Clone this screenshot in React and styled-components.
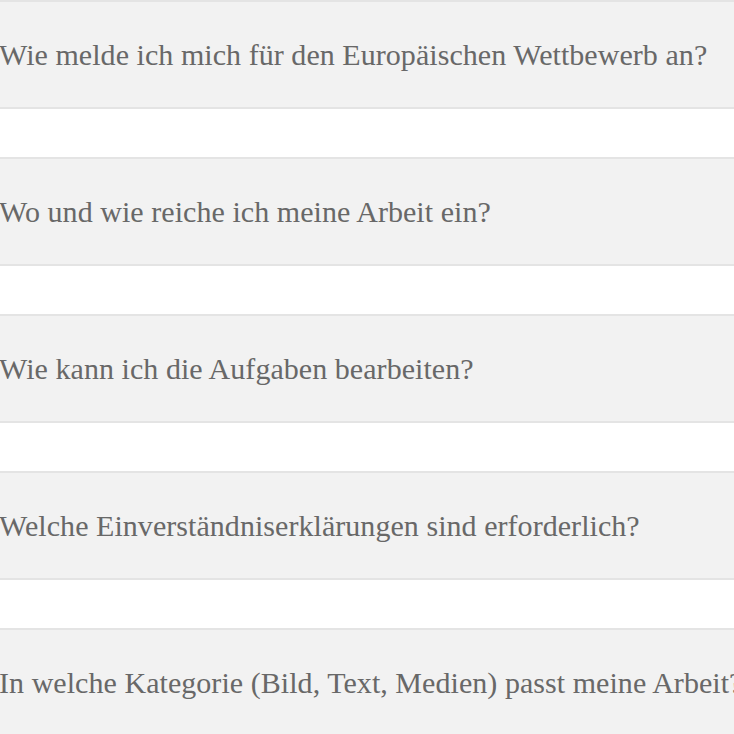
import React from "react";
import styled, { createGlobalStyle } from "styled-components";

const GlobalStyle = createGlobalStyle`
  html, body {
    margin: 0;
    padding: 0;
    background: #ffffff;
    overflow: hidden;
  }
`;

const FaqList = styled.div`
  display: flex;
  flex-direction: column;
  gap: 48px;
  margin-left: -4px;
  width: 780px;
  font-family: "Liberation Serif", "Times New Roman", serif;
`;

const Question = styled.div`
  display: flex;
  align-items: center;
  height: 105px;
  padding-left: 3px;
  background: #f2f2f2;
  border-top: 2px solid #e4e4e4;
  border-bottom: 2px solid #e4e4e4;
  color: #686868;
  font-size: 30px;
  letter-spacing: 0.05px;
  white-space: nowrap;
  cursor: pointer;
`;

const questions = [
  "Wie melde ich mich für den Europäischen Wettbewerb an?",
  "Wo und wie reiche ich meine Arbeit ein?",
  "Wie kann ich die Aufgaben bearbeiten?",
  "Welche Einverständniserklärungen sind erforderlich?",
  "In welche Kategorie (Bild, Text, Medien) passt meine Arbeit?",
];

const App = () => {
  return (
    <>
      <GlobalStyle />
      <FaqList>
        {questions.map((q) => (
          <Question key={q}>{q}</Question>
        ))}
      </FaqList>
    </>
  );
};

export default App;
